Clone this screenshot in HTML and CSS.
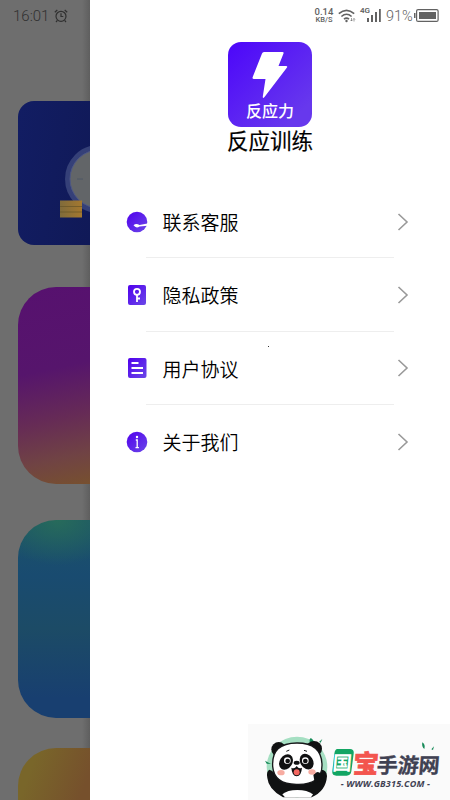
FILE: index.html
```html
<!DOCTYPE html>
<html lang="zh-CN">
<head>
<meta charset="utf-8">
<title>反应训练</title>
<link rel="stylesheet" href="styles.css">
</head>
<body>
<div class="screen">
  <aside class="backdrop">
    <div class="clock"><span class="time">16:01</span>
      <svg width="14" height="14" viewBox="0 0 14 14" fill="none" stroke="#303030" stroke-width="1.2"><circle cx="7" cy="7.3" r="5"/><path d="M7 4.3v3.2h2.3M.8 3.3 3.3 1M13.2 3.3 10.7 1M3.4 11.3 2 13M10.6 11.3 12 13"/></svg>
    </div>
    <div class="card card-clock">
      <svg width="72" height="144" viewBox="0 0 72 144">
        <defs><linearGradient id="gold"><stop stop-color="#806b3b"/><stop offset="1" stop-color="#a4782f"/></linearGradient></defs>
        <circle cx="81" cy="78" r="31.5" fill="#626568" stroke="#354078" stroke-width="5"/>
        <circle cx="81" cy="78" r="29" fill="none" stroke="#4d5785" stroke-width="1"/>
        <path d="M59 78h6" stroke="#4a5364" stroke-width=".8"/>
        <path d="M42 99.500h22v17H42z" fill="url(#gold)"/>
        <path d="M42 105.500h22M42 111h22" stroke="#665326" stroke-width=".7"/>
      </svg>
    </div>
    <div class="card card-purple"></div>
    <div class="card card-blue"></div>
    <div class="card card-gold"></div>
  </aside>
  <main class="drawer">
    <header class="status">
      <div class="speed"><span>0.14</span><span>KB/S</span></div>
      <svg class="wifi" width="18" height="14" viewBox="0 0 18 14" fill="none" stroke="#626262" stroke-width="1.6"><path d="M.8 4.700Q8.500-2 16.200 4.700M3.400 7.500Q8.500 3 13.600 7.500M6 10.200Q8.500 8 11 10.200"/><circle cx="8.500" cy="12" r="1.200" fill="#626262" stroke="none"/><path d="M13.500 9v3M12.500 11l1 1 1-1M16 12.500v-3M15 10.500l1-1 1 1" stroke-width=".6"/></svg>
      <span class="net">4G</span>
      <svg class="signal" width="14" height="13" viewBox="0 0 14 13" fill="#626262"><path d="M0 9h2v4H0zM4 6h2v7H4zM8 3h2v10H8zM12 0h1.800v13H12z"/></svg>
      <span class="percent">91%</span>
      <svg width="25" height="13" viewBox="0 0 25 13"><rect x="2.600" y=".6" width="21.500" height="11.800" rx="1.500" fill="none" stroke="#626262" stroke-width="1.200"/><path d="M5 3h17v7H5zM0 4h1.500v5H0z" fill="#626262"/></svg>
    </header>
    <section class="brand">
      <div class="logo">
        <svg width="36" height="48" viewBox="0 0 36 48"><path d="M12 1h18.500q1.500 0 1 1.500L26.500 15H34q2 0 .8 1.700L12.500 46q-2 2-1.700-.5L13.500 28H2q-2 0-1.300-2L10 2.500Q10.500 1 12 1Z" fill="#fff"/></svg>
        <span>反应力</span>
      </div>
      <h1>反应训练</h1>
    </section>
    <nav class="menu">
      <svg class="defs" width="0" height="0"><defs><linearGradient id="violet" x1="0" y1="0" x2="1" y2="1"><stop stop-color="#5000ed"/><stop offset="1" stop-color="#6b48e8"/></linearGradient></defs></svg>
      <a class="item"><svg class="icon" viewBox="0 0 22 22"><circle cx="11" cy="11" r="10.300" fill="url(#violet)"/><path d="M7.500 14.300q2.500-2.300 6-.3l8-1.600v2.300l-8 .9q-3.500 2.200-6-1.300Z" fill="#fff"/></svg><span>联系客服</span><svg class="arrow" viewBox="0 0 12 18"><path d="m1.500 1 8.500 8-8.500 8"/></svg></a>
      <a class="item"><svg class="icon" viewBox="0 0 22 22"><rect x="2" y="1" width="18" height="20" rx="2" fill="url(#violet)"/><g fill="none" stroke="#fff" stroke-width="1.800"><circle cx="11" cy="7.800" r="3"/><path d="M11 10.800V18M11 14.500h3"/></g></svg><span>隐私政策</span><svg class="arrow" viewBox="0 0 12 18"><path d="m1.500 1 8.500 8-8.500 8"/></svg></a>
      <a class="item"><svg class="icon" viewBox="0 0 22 22"><rect x="2" y="1" width="18.500" height="20" rx="2" fill="url(#violet)"/><path d="M5.500 6h7M5.500 11H17M5.500 16H17" stroke="#fff" stroke-width="1.800"/></svg><span>用户协议</span><svg class="arrow" viewBox="0 0 12 18"><path d="m1.500 1 8.500 8-8.500 8"/></svg></a>
      <a class="item"><svg class="icon" viewBox="0 0 22 22"><circle cx="11" cy="11" r="10.300" fill="url(#violet)"/><circle cx="11" cy="6" r="1.200" fill="#fff"/><path d="M9.800 9h1.400v7.500M9.500 16.700h3.400" fill="none" stroke="#fff" stroke-width="1.300"/></svg><span>关于我们</span><svg class="arrow" viewBox="0 0 12 18"><path d="m1.500 1 8.500 8-8.500 8"/></svg></a>
    </nav>
  </main>
  <i class="speck"></i>
  <div class="watermark">
    <svg width="202" height="76" viewBox="9 12 606 228">
      <circle cx="156" cy="141" r="91" fill="#a5dfc2"/>
      <path d="M194 67q-2-16 7-11l10 14ZM60 122l18 10-13-1ZM222 66l10-9-5 11ZM532 67q10 6 6 20-9-7-6-20ZM559 88l8-9-3 11ZM548 88l5 5" fill="#168a58"/>
      <g fill="#101112"><ellipse cx="101" cy="88" rx="22" ry="22"/><ellipse cx="207" cy="86" rx="24" ry="23"/><path d="M73 149q-10 5-6 25 3 34 47 58h86q43-19 46-64-1-18-17-19-17 2-21 16-46 28-110 8-10-20-25-24Z"/></g>
      <path d="M112 223q15-13 45-13t47 13l-6 9h-78Z" fill="#fff"/>
      <path d="M83 139q-4-70 73-70 75 0 75 67 0 60-77 57-67 0-71-54Z" fill="#fff" stroke="#161719" stroke-width="4"/>
      <path d="M205 164q12-15 23-3l3 22-22 5Z" fill="#101112"/>
      <g fill="#101112"><ellipse cx="123" cy="126" rx="19" ry="25" transform="rotate(32 123 126)"/><ellipse cx="185" cy="125" rx="19" ry="25" transform="rotate(-32 185 125)"/></g>
      <g fill="#fff"><circle cx="127" cy="122" r="10"/><circle cx="181" cy="122" r="10"/></g>
      <g fill="#101112"><circle cx="128" cy="123" r="7"/><circle cx="181" cy="123" r="7"/><ellipse cx="155" cy="128" rx="9" ry="6"/><path d="M139 143q9 6 16-5 7 11 16 5-2 25-16 26-14-1-16-26Z"/></g>
      <ellipse cx="155" cy="157" rx="9" ry="9" fill="#f46760"/>
      <g fill="#f7aca1"><ellipse cx="108" cy="158" rx="11" ry="8"/><ellipse cx="201" cy="156" rx="11" ry="8"/></g>
      <path d="m124 94 9-4M177 91l9 3" stroke="#161719" stroke-width="3"/>
      <path d="M277 87h38q13 0 11 14l-7 53q-2 13-14 13h-31q-14 0-12-14l6-52q2-14 9-14Z" fill="#12a563"/>
      <g class="wm-text" transform="skewX(-5)">
        <text x="274" y="150" class="wm-guo">国</text>
        <text x="336" y="158" class="wm-bao">宝</text>
        <text x="408" y="159" class="wm-name" textLength="188">手游网</text>
      </g>
      <text x="287" y="202" class="wm-url" textLength="268">- WWW.GB315.COM -</text>
    </svg>
  </div>
</div>
</body>
</html>
```

FILE: styles.css
```css
* { box-sizing: border-box; }
body { margin: 0; background: #fff; font-family: Roboto, "Noto Sans CJK SC", sans-serif; }
.screen { position: relative; display: flex; width: 450px; height: 800px; overflow: hidden; }
.backdrop { width: 90px; flex: none; height: 800px; overflow: hidden; padding-left: 18px; background: linear-gradient(90deg, transparent 82px, rgba(0,0,0,.14)), #6e6e6e; }
.clock { display: flex; align-items: center; gap: 5px; height: 101px; margin-left: -5px; padding: 0 0 69px; color: #303030; font-size: 15px; white-space: nowrap; }
.clock svg { flex: none; }
.time { font-weight: 300; }
.card { width: 72px; overflow: hidden; }
.card svg { display: block; }
.card-clock { height: 144px; border-radius: 16px 0 0 16px; background: linear-gradient(100deg, #121d63, #101957); }
.card-purple { height: 197px; margin-top: 42px; border-radius: 38px 0 0 38px; background: linear-gradient(168deg, #57116f 0%, #56156c 42%, #662b56 66%, #704344 85%, #77502f 100%); }
.card-blue { height: 198px; margin-top: 36px; border-radius: 38px 0 0 38px; background: radial-gradient(ellipse 65px 45px at 40px 0, #276b5b, transparent), linear-gradient(#1b5368 0, #194b70 28%, #1c4b66 55%, #183f70 90%); }
.card-gold { height: 80px; margin-top: 30px; border-radius: 38px 0 0; background: linear-gradient(110deg, #79662a 20%, #76502c 80%); }
.drawer { display: flex; flex-direction: column; width: 360px; background: #fff; }
.status { display: flex; align-items: center; height: 31px; padding-left: 223px; color: #626262; }
.speed { display: flex; flex-direction: column; align-items: center; width: 22px; font-size: 9px; line-height: 9px; font-weight: 500; }
.speed span:first-child { font-size: 9.500px; }
.speed span:last-child { font-size: 7.500px; line-height: 8px; }
.wifi { margin-left: 3px; flex: none; }
.net { margin: -9px 0 0 4px; font-size: 8px; line-height: 10px; font-weight: 600; }
.signal { margin: 0 5px 0 -3px; flex: none; }
.percent { width: 28px; margin-top: 1px; font-size: 14.5px; font-weight: 300; }
.brand { display: flex; flex-direction: column; align-items: center; padding-top: 11px; }
.logo { display: flex; flex-direction: column; align-items: center; width: 84px; height: 85px; padding-top: 9px; border-radius: 13px; background: linear-gradient(135deg, #4c06fa, #6738ed 85%); color: #fff; }
.logo span { margin-top: 3px; font-size: 16px; line-height: 20px; font-weight: 500; }
h1 { margin: 0; color: #000; font-size: 21.5px; line-height: 30px; font-weight: 400; -webkit-text-stroke: .2px #000; }
.menu { display: flex; flex-direction: column; width: 360px; padding-top: 28px; }
.defs { position: absolute; }
.item { display: grid; grid-template-columns: 22px 1fr 12px; column-gap: 15px; align-items: center; height: 73.300px; padding: 0 41px 0 35.500px; color: #000; font-size: 19px; font-weight: 350; background: linear-gradient(90deg, #eee, #eee) 56px 100% / 248px 1px no-repeat; }
.item:last-child { background: none; }
.icon { width: 22px; height: 22px; }
.arrow { width: 12px; height: 18px; fill: none; stroke: #999; stroke-width: 1.600; }
.speck { position: absolute; left: 268px; top: 346px; width: 1px; height: 1px; background: #333; }
.watermark { position: absolute; left: 248px; top: 724px; width: 202px; height: 76px; background: #fafafa; }
.watermark svg { display: block; }
.wm-text { font-family: "Noto Sans CJK SC", sans-serif; font-weight: 900; }
.wm-guo { font-size: 58px; font-weight: 700; fill: #fff; }
.wm-bao { font-size: 76px; fill: #f3554e; stroke: #f3554e; stroke-width: 2px; }
.wm-name { font-size: 63px; font-weight: 700; fill: #3f4152; stroke: #3f4152; stroke-width: 1px; }
.wm-url { font-family: "Open Sans", sans-serif; font-size: 27px; font-weight: 700; font-style: italic; fill: #3f4152; }
```
